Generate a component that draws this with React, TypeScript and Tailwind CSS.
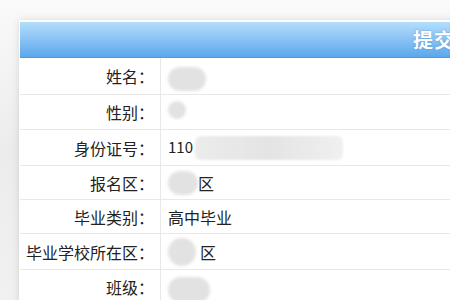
const font = { fontFamily: '"SimSun", "Noto Sans CJK SC", sans-serif' }

function Blob({ className }: { className: string }) {
  return <span className={`inline-block rounded-full bg-[#e2e2e2] blur-[1.5px] ${className}`} />
}

interface Row {
  label: string
  value: React.ReactNode
  h: string
}

const rows: Row[] = [
  {
    label: '姓名：',
    h: 'h-[37px]',
    value: <Blob className="w-[38px] h-[24px] mt-[6px]" />,
  },
  {
    label: '性别：',
    h: 'h-[35px]',
    value: <Blob className="w-[18px] h-[18px] -mt-[4px]" />,
  },
  {
    label: '身份证号：',
    h: 'h-[36px]',
    value: (
      <span className="flex items-center">
        <span className="text-[15px]">110</span>
        <span className="ml-[2px] inline-block w-[148px] h-[24px] bg-gradient-to-r from-[#ececec] via-[#e4e4e4] to-[#f0f0f0] rounded-[6px] blur-[1px]" />
      </span>
    ),
  },
  {
    label: '报名区：',
    h: 'h-[34px]',
    value: (
      <span className="flex items-center">
        <Blob className="w-[30px] h-[24px]" />
        <span>区</span>
      </span>
    ),
  },
  { label: '毕业类别：', h: 'h-[34px]', value: <span>高中毕业</span> },
  {
    label: '毕业学校所在区：',
    h: 'h-[36px]',
    value: (
      <span className="flex items-center">
        <Blob className="w-[28px] h-[28px]" />
        <span className="ml-[4px]">区</span>
      </span>
    ),
  },
  {
    label: '班级：',
    h: 'h-[35px]',
    value: <Blob className="w-[42px] h-[26px] mt-[6px]" />,
  },
]

export default function App() {
  return (
    <div
      className="w-[450px] h-[300px] overflow-hidden bg-gradient-to-b from-[#fafafa] via-[#ececec] to-[#f1f1f1] pt-[20px] pl-[19px]"
      style={font}
    >
      <div className="w-[460px] bg-white border-t-2 border-l border-white shadow-[0_0_8px_rgba(0,0,0,0.12)]">
        <div className="h-[36px] bg-gradient-to-b from-[#b4defb] to-[#5ba7ec] border-b border-[#5599dd] flex items-center pl-[393px]">
          <span className="whitespace-nowrap text-white text-[20px] font-bold tracking-[1px] [text-shadow:0_0_2px_rgba(60,120,190,0.6)]">
            提交
          </span>
        </div>
        {rows.map((r) => (
          <div key={r.label} className={`flex border-b border-[#e8e8e8] ${r.h}`}>
            <div className="w-[141px] shrink-0 border-r border-[#e8e8e8] flex items-center justify-end pr-[6px] text-[16px] text-[#222]">
              {r.label}
            </div>
            <div className="flex-1 flex items-center pl-[7px] text-[16px] text-[#222]">{r.value}</div>
          </div>
        ))}
      </div>
    </div>
  )
}
